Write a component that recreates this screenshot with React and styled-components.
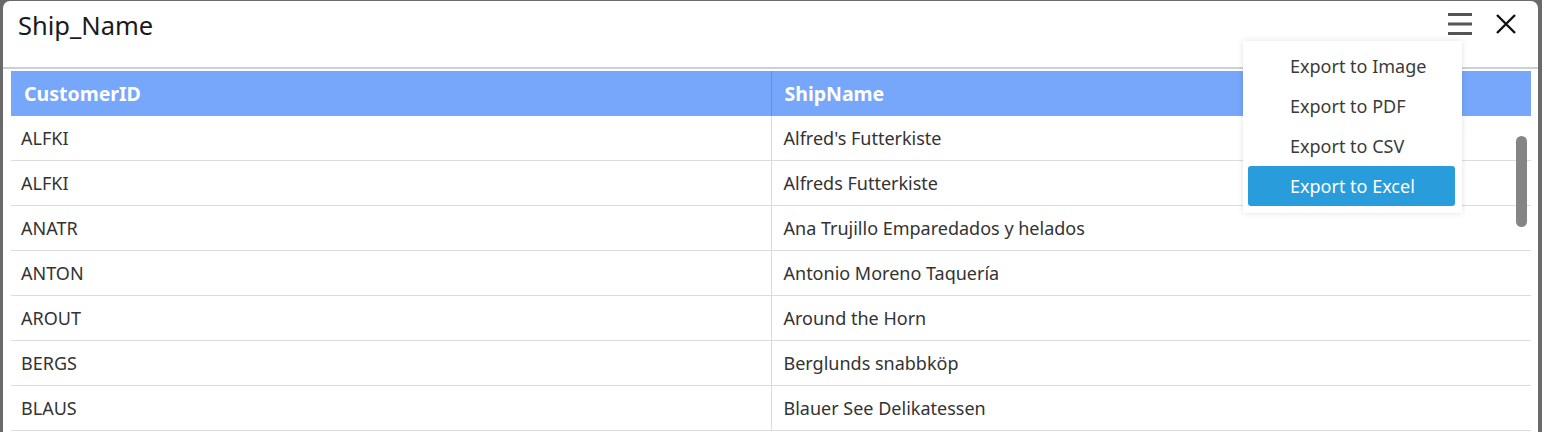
import React from 'react';
import styled, { createGlobalStyle } from 'styled-components';

const GlobalStyle = createGlobalStyle`
  html, body {
    margin: 0;
    padding: 0;
    background: #6a6a6a;
    overflow: hidden;
  }
`;

const rows = [
  ['ALFKI', "Alfred's Futterkiste"],
  ['ALFKI', 'Alfreds Futterkiste'],
  ['ANATR', 'Ana Trujillo Emparedados y helados'],
  ['ANTON', 'Antonio Moreno Taquería'],
  ['AROUT', 'Around the Horn'],
  ['BERGS', 'Berglunds snabbköp'],
  ['BLAUS', 'Blauer See Delikatessen'],
];

const menuItems = ['Export to Image', 'Export to PDF', 'Export to CSV', 'Export to Excel'];

const Backdrop = styled.div`
  width: 1542px;
  height: 432px;
  padding: 1px 4px 0 3px;
  box-sizing: border-box;
  overflow: hidden;
`;

const Dialog = styled.div`
  position: relative;
  background: #fff;
  border-radius: 7px 7px 0 0;
  height: 100%;
  font-family: 'Noto Sans', 'Open Sans', sans-serif;
`;

const Header = styled.div`
  display: flex;
  align-items: flex-start;
  justify-content: space-between;
  height: 68px;
  border-bottom: 2px solid #c7d1dc;
  padding: 8px 21px 0 15px;
  box-sizing: border-box;
`;

const Title = styled.h2`
  margin: 0;
  font-size: 25.5px;
  font-weight: 400;
  color: #1a1a1a;
  line-height: 32px;
`;

const Tools = styled.div`
  display: flex;
  align-items: center;
  gap: 22px;
  padding-top: 3px;
`;

const IconButton = styled.button`
  border: 0;
  background: transparent;
  padding: 0;
  display: flex;
  cursor: pointer;
`;

const Body = styled.div`
  padding: 2px 7px 0 8px;
`;

const Table = styled.table`
  width: 100%;
  border-collapse: collapse;
  table-layout: fixed;
`;

const Th = styled.th`
  background: #76a7fa;
  color: #fff;
  font-size: 19.5px;
  font-weight: 700;
  text-align: left;
  height: 45px;
  padding: 0 13px;
  border-left: ${p => (p.first ? 'none' : '1px solid #5f93e8')};
`;

const Td = styled.td`
  font-size: 18px;
  color: #333;
  height: 44px;
  padding: 0 ${p => (p.first ? '10px' : '12px')};
  border-bottom: 1px solid #dcdcdc;
  border-left: ${p => (p.first ? 'none' : '1px solid #dcdcdc')};
  white-space: nowrap;
`;

const Menu = styled.ul`
  position: absolute;
  top: 40px;
  left: 1240px;
  width: 219px;
  margin: 0;
  padding: 5px 7px 7px 5px;
  box-sizing: border-box;
  list-style: none;
  background: #fff;
  box-shadow: 0 0 6px rgba(0, 0, 0, 0.12);
  z-index: 2;
`;

const MenuItem = styled.li`
  height: 40px;
  line-height: 40px;
  padding-left: 42px;
  font-size: 18px;
  color: ${p => (p.active ? '#fff' : '#3b3b3b')};
  background: ${p => (p.active ? '#299cdb' : 'transparent')};
  border-radius: 3px;
`;

const Thumb = styled.div`
  position: absolute;
  top: 135px;
  left: 1513px;
  width: 11px;
  height: 91px;
  border-radius: 6px;
  background: #858585;
`;

const HamburgerIcon = () => (
  <svg width="26" height="24" viewBox="0 0 26 24">
    <rect x="1" y="1" width="24" height="3" fill="#555" />
    <rect x="1" y="10.5" width="24" height="3" fill="#555" />
    <rect x="1" y="20" width="24" height="3" fill="#555" />
  </svg>
);

const CloseIcon = () => (
  <svg width="22" height="22" viewBox="0 0 22 22">
    <path d="M2 2 L20 20 M20 2 L2 20" stroke="#111" strokeWidth="2.4" />
  </svg>
);

const App = () => (
  <>
    <GlobalStyle />
    <Backdrop>
      <Dialog>
        <Header>
          <Title>Ship_Name</Title>
          <Tools>
            <IconButton aria-label="menu"><HamburgerIcon /></IconButton>
            <IconButton aria-label="close"><CloseIcon /></IconButton>
          </Tools>
        </Header>
        <Body>
          <Table>
            <thead>
              <tr>
                <Th first>CustomerID</Th>
                <Th>ShipName</Th>
              </tr>
            </thead>
            <tbody>
              {rows.map(([id, name], i) => (
                <tr key={i}>
                  <Td first>{id}</Td>
                  <Td>{name}</Td>
                </tr>
              ))}
            </tbody>
          </Table>
        </Body>
        <Menu>
          {menuItems.map(item => (
            <MenuItem key={item} active={item === 'Export to Excel'}>{item}</MenuItem>
          ))}
        </Menu>
        <Thumb />
      </Dialog>
    </Backdrop>
  </>
);

export default App;
